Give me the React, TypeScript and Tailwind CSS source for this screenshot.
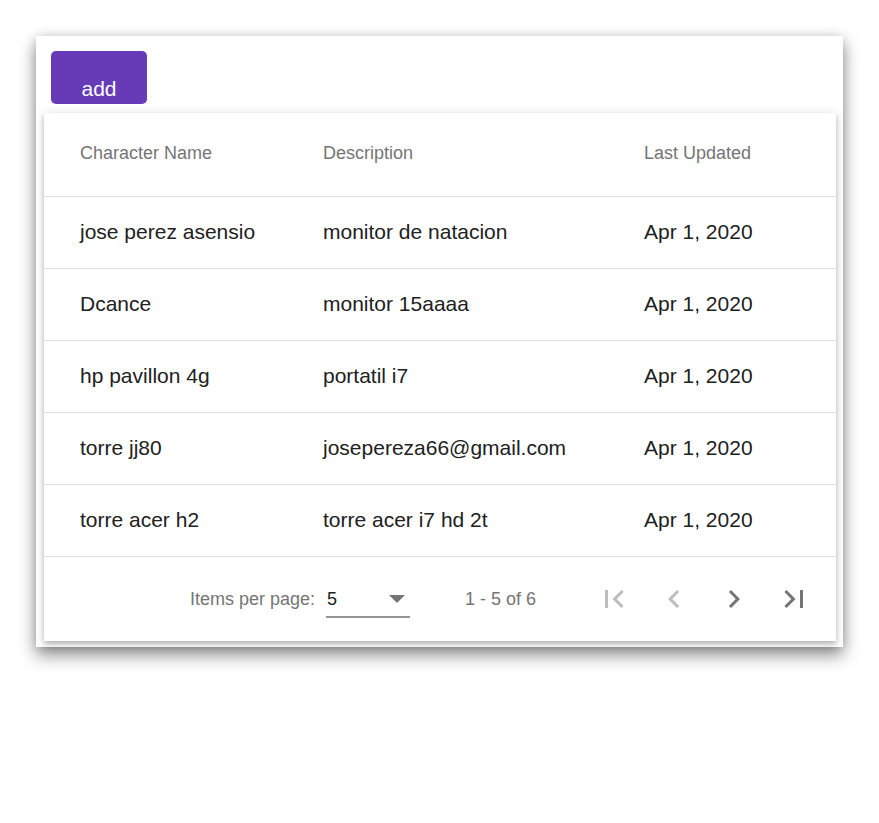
const rows = [
  { name: "jose perez asensio", desc: "monitor de natacion", date: "Apr 1, 2020" },
  { name: "Dcance", desc: "monitor 15aaaa", date: "Apr 1, 2020" },
  { name: "hp pavillon 4g", desc: "portatil i7", date: "Apr 1, 2020" },
  { name: "torre jj80", desc: "josepereza66@gmail.com", date: "Apr 1, 2020" },
  { name: "torre acer h2", desc: "torre acer i7 hd 2t", date: "Apr 1, 2020" },
];

function PageIcon({ d, disabled }: { d: string; disabled?: boolean }) {
  return (
    <button className="grid h-[60px] w-[60px] place-items-center">
      <svg viewBox="0 0 24 24" className={disabled ? "h-9 w-9 fill-[#bdbdbd]" : "h-9 w-9 fill-[#757575]"}>
        <path d={d} />
      </svg>
    </button>
  );
}

export default function App() {
  return (
    <div className="min-h-[823px] bg-white p-9 font-['Liberation_Sans',Arial,sans-serif]">
      <div className="bg-white pt-[15px] pb-[6px] shadow-[0_8px_16px_rgba(0,0,0,0.45),0_0_10px_rgba(0,0,0,0.12)]">
        <button className="ml-[15px] h-[53px] w-[96px] rounded-[5px] bg-[#673ab7] pt-[22px] text-[21px] leading-[24px] text-white">
          add
        </button>
        <div className="mt-[9px] ml-[8px] mr-[7px] bg-white shadow-[0_3px_5px_rgba(0,0,0,0.25),0_1px_12px_rgba(0,0,0,0.1)]">
          <div className="grid h-[84px] grid-cols-[243px_321px_1fr] items-center border-b border-[#e0e0e0] pb-[3px] pl-9 text-[18px] text-[#757575]">
            <span>Character Name</span>
            <span>Description</span>
            <span>Last Updated</span>
          </div>
          {rows.map((r) => (
            <div
              key={r.name}
              className="grid h-[72px] grid-cols-[243px_321px_1fr] items-center border-b border-[#e0e0e0] pb-[2px] pl-9 text-[21px] text-[#212121]"
            >
              <span>{r.name}</span>
              <span>{r.desc}</span>
              <span>{r.date}</span>
            </div>
          ))}
          <div className="flex h-[84px] items-center justify-end pr-[12px] text-[18px] text-[#757575]">
            <span>Items per page:</span>
            <div className="ml-[11px] flex h-[38px] w-[84px] items-center justify-between border-b-2 border-[#949494] pt-[2px]">
              <span className="pl-[1px] text-[#212121]">5</span>
              <span className="mr-[5px] h-0 w-0 border-x-[8px] border-t-[8px] border-x-transparent border-t-[#757575]" />
            </div>
            <span className="ml-[55px] mr-[48px]">1 - 5 of 6</span>
            <PageIcon disabled d="M18.41 16.59L13.82 12l4.59-4.59L17 6l-6 6 6 6zM6 6h2v12H6z" />
            <PageIcon disabled d="M15.41 7.41L14 6l-6 6 6 6 1.41-1.41L10.83 12z" />
            <PageIcon d="M10 6L8.59 7.41 13.17 12l-4.58 4.59L10 18l6-6z" />
            <PageIcon d="M5.59 7.41L10.18 12l-4.59 4.59L7 18l6-6-6-6zM16 6h2v12h-2z" />
          </div>
        </div>
      </div>
    </div>
  );
}
